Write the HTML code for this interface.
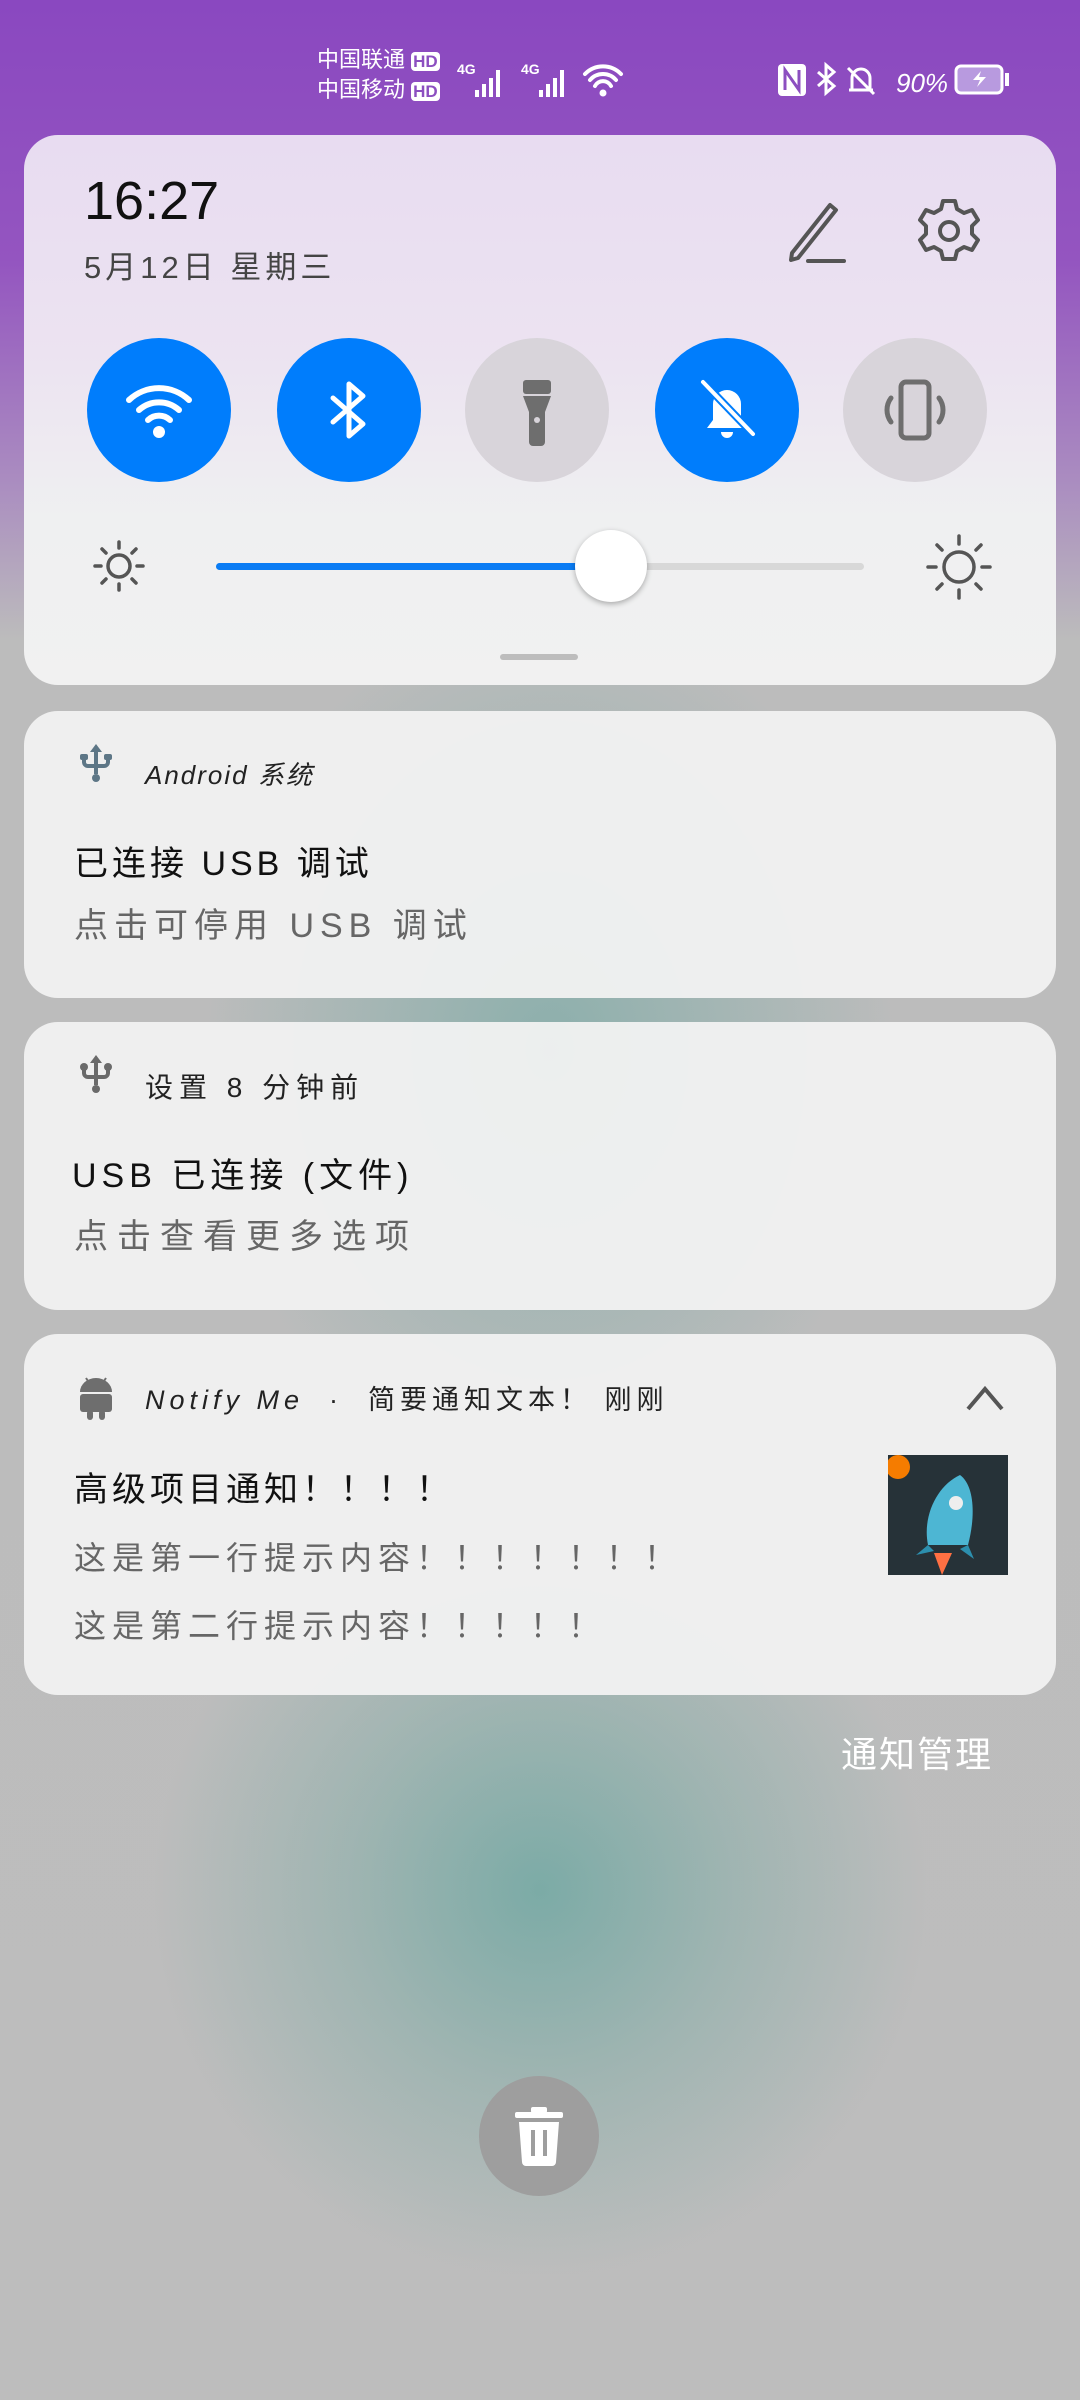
<!DOCTYPE html>
<html><head><meta charset="utf-8"><style>
*{margin:0;padding:0;box-sizing:border-box}
body{width:1080px;height:2400px;overflow:hidden;position:relative;font-family:"Liberation Sans","Noto Sans CJK SC",sans-serif;
background:linear-gradient(180deg,#8a48c0 0px,#9455c0 260px,#aa8cc0 480px,#bcbcbc 640px,#bdbdbd 2400px);}
.glow{position:absolute;border-radius:50%;}
.card{position:absolute;left:24px;width:1032px;border-radius:34px;background:rgba(242,242,242,0.94);}
.abs{position:absolute;white-space:nowrap}
.circ{position:absolute;width:144px;height:144px;border-radius:50%;top:338px;display:flex;align-items:center;justify-content:center}
.blue{background:#007dfc}.gray{background:#d8d4da}
</style></head><body>
<div class="glow" style="left:150px;top:1500px;width:780px;height:780px;background:radial-gradient(circle,rgba(120,170,165,0.95) 0%,rgba(140,175,170,0.6) 35%,rgba(189,189,189,0) 70%)"></div>
<div class="glow" style="left:200px;top:600px;width:700px;height:900px;background:radial-gradient(ellipse,rgba(120,170,165,0.7) 0%,rgba(189,189,189,0) 70%)"></div>

<!-- status bar -->
<div class="abs" style="left:317px;top:46px;color:#fff;font-size:22px;line-height:28px">中国联通 <span style="background:#fff;color:#8c4fc0;border-radius:4px;padding:0 2px;font-weight:bold;font-size:17px">HD</span><br>中国移动 <span style="background:#fff;color:#8c4fc0;border-radius:4px;padding:0 2px;font-weight:bold;font-size:17px">HD</span></div>
<svg class="abs" style="left:455px;top:58px" width="170" height="42" viewBox="0 0 170 42" fill="#fff">
<text x="2" y="16" font-size="14" font-weight="bold" fill="#fff" font-family="Liberation Sans">4G</text>
<rect x="20" y="32" width="4" height="7"/><rect x="27" y="26" width="4" height="13"/><rect x="34" y="20" width="4" height="19"/><rect x="41" y="12" width="4" height="27"/>
<text x="66" y="16" font-size="14" font-weight="bold" fill="#fff" font-family="Liberation Sans">4G</text>
<rect x="84" y="32" width="4" height="7"/><rect x="91" y="26" width="4" height="13"/><rect x="98" y="20" width="4" height="19"/><rect x="105" y="12" width="4" height="27"/>
<path d="M130 16a25 25 0 0 1 36 0M135 22a17 17 0 0 1 26 0M140 28a9 9 0 0 1 16 0" stroke="#fff" stroke-width="4" fill="none" stroke-linecap="round"/><circle cx="148" cy="35" r="3.5"/>
</svg>
<svg class="abs" style="left:776px;top:58px" width="240" height="42" viewBox="0 0 240 42">
<rect x="2" y="6" width="28" height="32" rx="4" fill="#fff"/><path d="M9 32V12l14 20V12" stroke="#8c4fc0" stroke-width="3" fill="none"/>
<path d="M42 14l16 14-8 7V7l8 7-16 14" stroke="#fff" stroke-width="3" fill="none"/>
<path d="M73 32h24M76 32v-12a9 9 0 0 1 18 0v12M72 10l26 26" stroke="#fff" stroke-width="3" fill="none"/>
<text x="120" y="34" font-size="26" fill="#fff" font-style="italic" font-family="Liberation Sans">90%</text>
<rect x="180" y="8" width="46" height="27" rx="5" fill="#b89adf" stroke="#fff" stroke-width="3"/><rect x="229" y="15" width="4" height="13" fill="#fff"/>
<path d="M205 13l-8 9h7l-3 7 9-10h-7z" fill="#fff"/>
</svg>

<!-- QS card -->
<div class="card" style="top:135px;height:550px;background:linear-gradient(180deg,#e8dcf1 0%,#ece3f1 40%,#eff0f1 70%,#f1f1f1 100%)"></div>
<div class="abs" style="left:84px;top:170px;font-size:54px;color:#111">16:27</div>
<div class="abs" style="left:84px;top:242px;font-size:31px;color:#444;letter-spacing:4px">5月12日 星期三</div>
<svg class="abs" style="left:780px;top:195px" width="70" height="70" viewBox="0 0 70 70"><path d="M12 58L50 10l6 5-38 48-7 2z" stroke="#555" stroke-width="4" fill="none" stroke-linejoin="round"/><path d="M28 66h36" stroke="#555" stroke-width="4" stroke-linecap="round"/></svg>
<svg class="abs" style="left:914px;top:196px" width="70" height="70" viewBox="-35 -35 70 70"><path d="M-6-30h12l2 8 7 4 8-3 6 10-6 6v8l6 6-6 10-8-3-7 4-2 8h-12l-2-8-7-4-8 3-6-10 6-6v-8l-6-6 6-10 8 3 7-4z" stroke="#555" stroke-width="4" fill="none" stroke-linejoin="round"/><circle r="9" stroke="#555" stroke-width="4" fill="none"/></svg>

<div class="circ blue" style="left:87px"><svg width="80" height="80" viewBox="0 0 80 80"><path d="M10 30a44 44 0 0 1 60 0M20 40a30 30 0 0 1 40 0M29 50a16 16 0 0 1 22 0" stroke="#fff" stroke-width="6" fill="none" stroke-linecap="round"/><circle cx="40" cy="62" r="6" fill="#fff"/></svg></div>
<div class="circ blue" style="left:277px"><svg width="80" height="80" viewBox="0 0 80 80"><path d="M24 28l30 26-14 12V14l14 12-30 26" stroke="#fff" stroke-width="5" fill="none" stroke-linejoin="round" stroke-linecap="round"/></svg></div>
<div class="circ gray" style="left:465px"><svg width="80" height="80" viewBox="0 0 80 80"><rect x="26" y="10" width="28" height="14" rx="3" fill="#6e6e6e"/><path d="M26 26h28l-6 16v30a4 4 0 0 1-4 4h-8a4 4 0 0 1-4-4V42z" fill="#6e6e6e"/><circle cx="40" cy="50" r="3" fill="#d8d4da"/></svg></div>
<div class="circ blue" style="left:655px"><svg width="80" height="80" viewBox="0 0 80 80"><path d="M20 58h40l-6-8V34a14 14 0 0 0-28 0v16z" fill="#fff"/><path d="M34 62a6 6 0 0 0 12 0z" fill="#fff"/><path d="M16 12l50 52" stroke="#007dfc" stroke-width="8"/><path d="M16 12l50 52" stroke="#fff" stroke-width="4" stroke-linecap="round"/></svg></div>
<div class="circ gray" style="left:843px"><svg width="80" height="80" viewBox="0 0 80 80"><rect x="26" y="12" width="28" height="56" rx="5" stroke="#6e6e6e" stroke-width="5" fill="none"/><path d="M16 28a20 20 0 0 0 0 24M64 28a20 20 0 0 1 0 24" stroke="#6e6e6e" stroke-width="5" fill="none" stroke-linecap="round"/></svg></div>

<svg class="abs" style="left:89px;top:536px" width="60" height="60" viewBox="-30 -30 60 60" stroke="#555" stroke-width="3.5" fill="none" stroke-linecap="round"><circle r="11"/><path d="M0-24v6M0 18v6M-24 0h6M18 0h6M-17-17l4 4M13 13l4 4M-17 17l4-4M13-13l4-4"/></svg>
<div class="abs" style="left:216px;top:563px;width:648px;height:7px;border-radius:4px;background:#d8d8d8"></div>
<div class="abs" style="left:216px;top:563px;width:400px;height:7px;border-radius:4px;background:#0a7cf4"></div>
<div class="abs" style="left:575px;top:530px;width:72px;height:72px;border-radius:50%;background:#fff;box-shadow:0 2px 6px rgba(0,0,0,0.3)"></div>
<svg class="abs" style="left:924px;top:532px" width="70" height="70" viewBox="-35 -35 70 70" stroke="#555" stroke-width="3.5" fill="none" stroke-linecap="round"><circle r="15"/><path d="M0-31v8M0 23v8M-31 0h8M23 0h8M-22-22l5 5M17 17l5 5M-22 22l5-5M17-17l5-5"/></svg>
<div class="abs" style="left:500px;top:654px;width:78px;height:6px;border-radius:3px;background:#bdbdbd"></div>

<!-- card 2 -->
<div class="card" style="top:711px;height:287px"></div>
<svg class="abs" style="left:78px;top:742px" width="36" height="42" viewBox="0 0 36 42" fill="#5d7686"><path d="M18 2l-6 8h4v22h4V10h4z"/><circle cx="18" cy="36" r="4"/><path d="M6 14v6a4 4 0 0 0 4 4h8M30 14v6a4 4 0 0 1-4 4h-8" stroke="#5d7686" stroke-width="4" fill="none"/><rect x="2" y="12" width="8" height="6" rx="2"/><rect x="26" y="12" width="8" height="6" rx="2"/></svg>
<div class="abs" style="left:145px;top:755px;font-size:26px;color:#222;font-style:italic;letter-spacing:2px">Android 系统</div>
<div class="abs" style="left:74px;top:836px;font-size:34px;color:#111;letter-spacing:4px">已连接 USB 调试</div>
<div class="abs" style="left:74px;top:898px;font-size:34px;color:#666;letter-spacing:6px">点击可停用 USB 调试</div>

<!-- card 3 -->
<div class="card" style="top:1022px;height:288px"></div>
<svg class="abs" style="left:78px;top:1053px" width="36" height="42" viewBox="0 0 36 42" fill="#6a6a6a"><path d="M18 2l-6 8h4v22h4V10h4z"/><circle cx="18" cy="36" r="4"/><path d="M6 14v6a4 4 0 0 0 4 4h8M30 14v6a4 4 0 0 1-4 4h-8" stroke="#6a6a6a" stroke-width="4" fill="none"/><circle cx="6" cy="14" r="4"/><circle cx="30" cy="14" r="4"/></svg>
<div class="abs" style="left:145px;top:1066px;font-size:28px;color:#222;letter-spacing:6px">设置 8 分钟前</div>
<div class="abs" style="left:72px;top:1148px;font-size:34px;color:#111;letter-spacing:5px">USB 已连接 (文件)</div>
<div class="abs" style="left:74px;top:1209px;font-size:34px;color:#666;letter-spacing:9px">点击查看更多选项</div>

<!-- card 4 -->
<div class="card" style="top:1334px;height:361px"></div>
<svg class="abs" style="left:76px;top:1372px" width="40" height="48" viewBox="0 0 40 48" fill="#6e6e6e"><path d="M4 20a16 14 0 0 1 32 0z"/><rect x="4" y="22" width="32" height="18" rx="3"/><rect x="11" y="38" width="6" height="10" rx="3"/><rect x="23" y="38" width="6" height="10" rx="3"/><path d="M10 6l4 6M30 6l-4 6" stroke="#6e6e6e" stroke-width="2"/></svg>
<div class="abs" style="left:145px;top:1378px;font-size:27px;color:#222;letter-spacing:5px"><i>Notify Me</i> &nbsp;·&nbsp; 简要通知文本！ 刚刚</div>
<svg class="abs" style="left:964px;top:1383px" width="42" height="30" viewBox="0 0 42 30"><path d="M4 26L21 6l17 20" stroke="#555" stroke-width="4" fill="none"/></svg>
<div class="abs" style="left:74px;top:1462px;font-size:34px;color:#111;letter-spacing:4px">高级项目通知！！！！</div>
<div class="abs" style="left:74px;top:1533px;font-size:32px;color:#666;letter-spacing:6px">这是第一行提示内容！！！！！！！</div>
<div class="abs" style="left:74px;top:1601px;font-size:32px;color:#666;letter-spacing:6px">这是第二行提示内容！！！！！</div>
<svg class="abs" style="left:888px;top:1455px" width="120" height="120" viewBox="0 0 120 120"><rect width="120" height="120" fill="#263238"/><circle cx="10" cy="12" r="12" fill="#f57c00"/><path d="M72 20c14 10 16 40 8 70H40c-6-30 10-60 32-70z" fill="#4db6d3"/><path d="M40 90l-12 10 18-4zM80 90l6 14-14-10z" fill="#2c8fae"/><circle cx="68" cy="48" r="7" fill="#eee"/><path d="M46 98l8 22 10-22z" fill="#ff7043"/></svg>

<div class="abs" style="left:841px;top:1726px;font-size:36px;color:#fff;letter-spacing:2px">通知管理</div>

<div class="abs" style="left:479px;top:2076px;width:120px;height:120px;border-radius:50%;background:#9e9e9e;display:flex;align-items:center;justify-content:center"><svg width="64" height="64" viewBox="0 0 64 64" fill="#fff"><rect x="8" y="8" width="48" height="6" rx="2"/><rect x="24" y="3" width="16" height="6" rx="2"/><path d="M12 18h40l-3 40a4 4 0 0 1-4 4H19a4 4 0 0 1-4-4z"/><rect x="24" y="26" width="4" height="26" fill="#9e9e9e"/><rect x="36" y="26" width="4" height="26" fill="#9e9e9e"/></svg></div>
</body></html>
